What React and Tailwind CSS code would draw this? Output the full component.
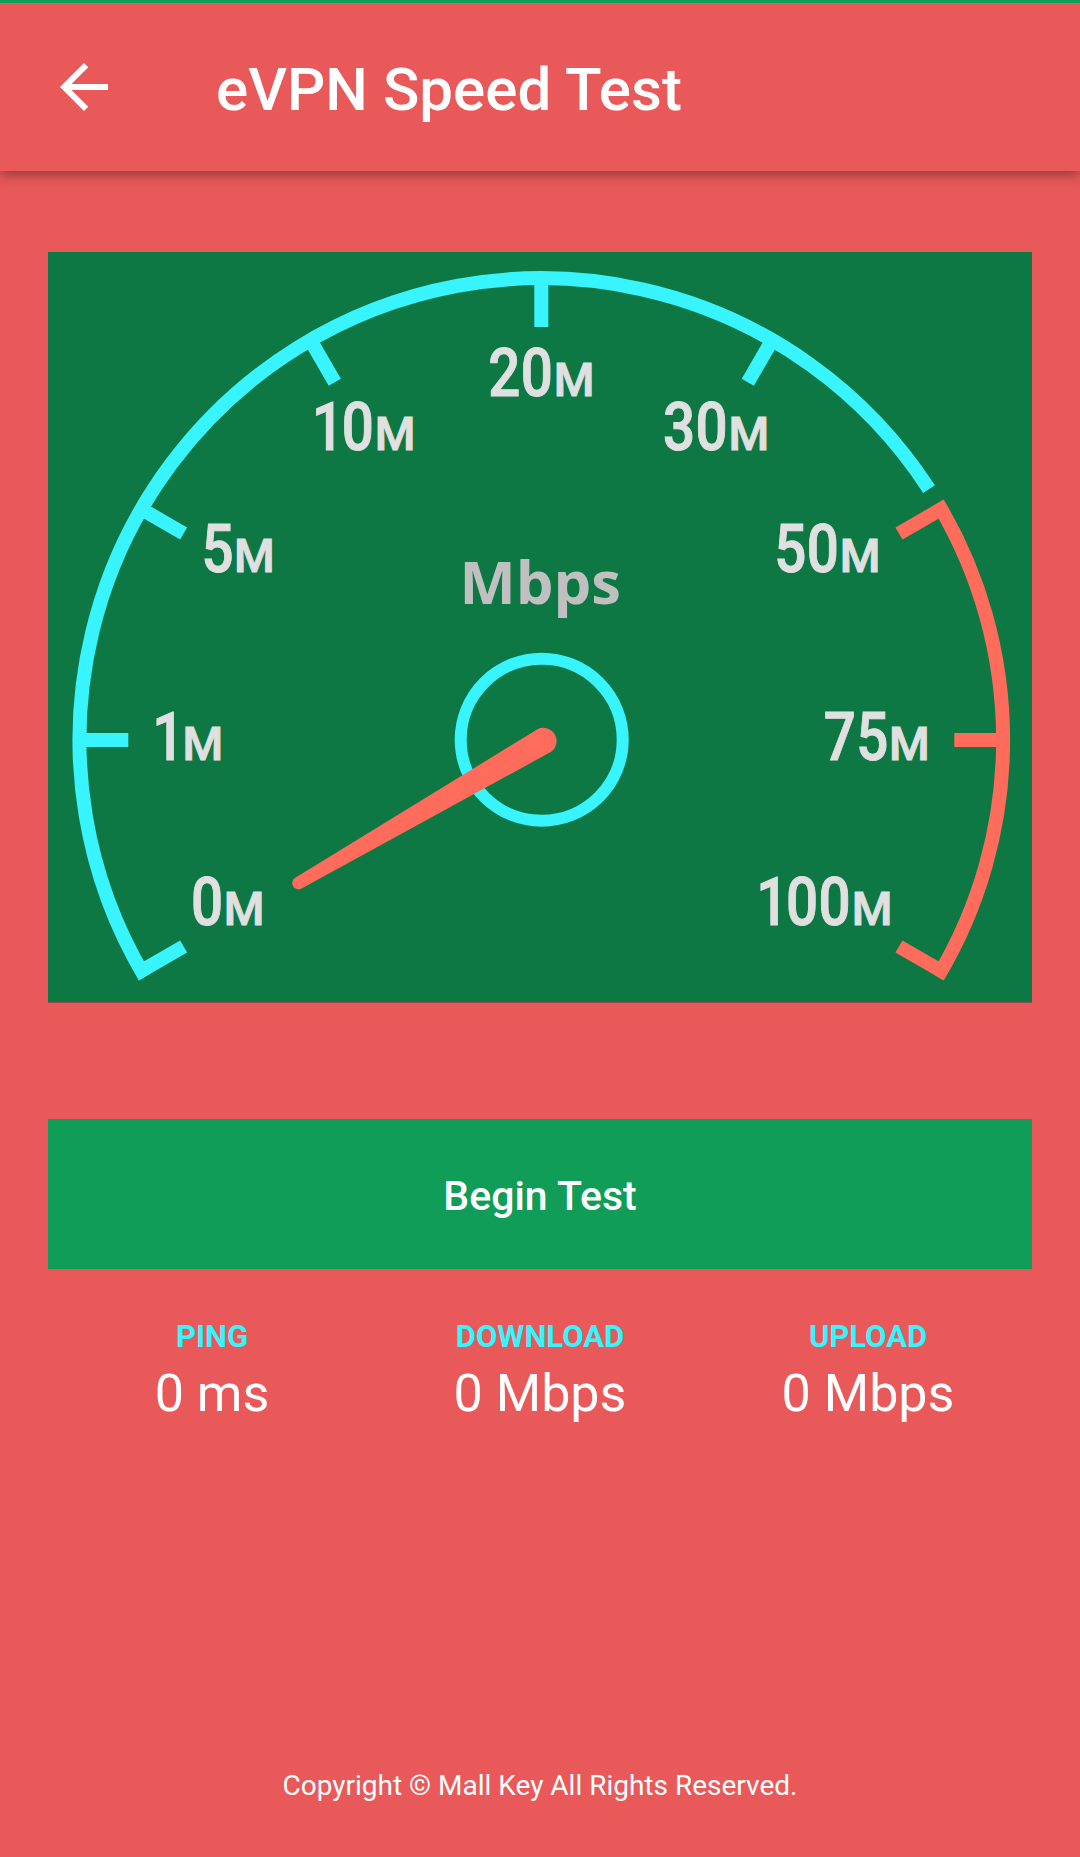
import React from 'react';
import { MdArrowBack } from 'react-icons/md';

const CYAN = '#38f4ff';
const CORAL = '#ff6c5b';

// Dial geometry, in the gauge's own 984 x 751 space
const CX = 493.3;
const CY = 488;
const R = 461.8;

const ticks = [
  { angle: 210, color: CYAN },
  { angle: 180, color: CYAN },
  { angle: 150, color: CYAN },
  { angle: 120, color: CYAN },
  { angle: 90, color: CYAN },
  { angle: 60, color: CYAN },
  { angle: 30, color: CORAL },
  { angle: 0, color: CORAL },
  { angle: -30, color: CORAL },
];

// x is the left edge of the small M, digits run up to it
const labels = [
  { value: '0', x: 179.3, y: 673.5 },
  { value: '1', x: 138, y: 508.9 },
  { value: '5', x: 189.7, y: 320.5 },
  { value: '10', x: 330.3, y: 198.2 },
  { value: '20', x: 509.3, y: 144.2 },
  { value: '30', x: 684, y: 198.2 },
  { value: '50', x: 795.3, y: 320.5 },
  { value: '75', x: 844.7, y: 508.9 },
  { value: '100', x: 807.3, y: 673.5 },
];

const results = [
  { label: 'PING', value: '0 ms' },
  { label: 'DOWNLOAD', value: '0 Mbps' },
  { label: 'UPLOAD', value: '0 Mbps' },
];

const point = (angle, r) => {
  const a = (angle * Math.PI) / 180;
  return [CX + r * Math.cos(a), CY - r * Math.sin(a)];
};

const arc = (from, to) => {
  const large = from - to > 180 ? 1 : 0;
  return `M${point(from, R).join(' ')} A${R} ${R} 0 ${large} 1 ${point(to, R).join(' ')}`;
};

// Tabular digits; the 1 sits a little further right in its cell
const digitOffsets = (value) =>
  [...value].map((d, i) => i * 38.2 + (d === '1' ? 3 : 0)).join(' ');

const Gauge = () => (
  <svg viewBox="0 0 984 751" className="block w-[984px] h-[751px]">
    <rect width="984" height="750" fill="#0d7843" />
    <rect y="750" width="984" height="1" fill="#964d50" />

    <path d={arc(210.86, 32.9)} fill="none" stroke={CYAN} strokeWidth="14" />
    <path d={arc(30.86, -30.86)} fill="none" stroke={CORAL} strokeWidth="14" />
    {ticks.map(({ angle, color }) => {
      const [x1, y1] = point(angle, 468);
      const [x2, y2] = point(angle, 413);
      return <line key={angle} x1={x1} y1={y1} x2={x2} y2={y2} stroke={color} strokeWidth="14" />;
    })}

    {labels.map(({ value, x, y }) => (
      <g key={value} fill="#e0e0e0" stroke="#e0e0e0" strokeWidth="1" className="font-[Roboto,sans-serif] font-medium">
        <text
          transform={`translate(${x - 3.6 - value.length * 32.7} ${y - 0.5}) scale(0.85 1)`}
          x={digitOffsets(value)}
          fontSize="66.5"
        >
          {value}
        </text>
        <text x={x - 3.6} y={y - 0.5} fontSize="46.5">M</text>
      </g>
    ))}

    <text x="411.5" y="352.4" fontSize="59.5" textLength="161.5" lengthAdjust="spacingAndGlyphs" fill="#c0c0c0" className="font-['Open_Sans',sans-serif] font-bold">
      Mbps
    </text>

    {/* Hub and needle */}
    <circle cx="493.7" cy="487.7" r="81" fill="none" stroke={CYAN} strokeWidth="12" />
    <path d="M247.3 625.7 L489.5 477.2 A13.2 13.2 0 0 1 502.7 500 L253.6 636.4 A6.2 6.2 0 0 1 247.3 625.7 Z" fill={CORAL} />
  </svg>
);

const App = () => {
  return (
    <div className="w-[1080px] h-[1857px] flex flex-col bg-[#e95959] text-white font-[Roboto,sans-serif] overflow-hidden">
      <div className="relative z-10 h-[3px] bg-[#0f9d58] shrink-0"></div>

      {/* App bar */}
      <header className="relative h-[168px] shrink-0 flex items-center pl-12 bg-[#e95959] shadow-[0_4px_12px_rgba(0,0,0,0.36)]">
        <MdArrowBack className="w-[72px] h-[72px]" />
        <h1 className="ml-24 mt-[5px] text-[60px] leading-[70px] font-medium tracking-[0.06px]">eVPN Speed Test</h1>
      </header>

      <main className="flex-1 flex flex-col px-12 pt-[81px]">
        <Gauge />

        <button className="mt-[116px] h-[150px] shrink-0 pt-[6px] bg-[#0f9d58] text-[41px] font-medium">Begin Test</button>

        <div className="mt-[48px] grid grid-cols-3 text-center">
          {results.map(({ label, value }) => (
            <div key={label}>
              <div className="text-[31px] leading-[40px] font-bold text-[#38f4ff]">{label}</div>
              <div className="mt-px text-[52px] leading-[72px]">{value}</div>
            </div>
          ))}
        </div>
      </main>

      <footer className="pb-[54px] text-center text-[28px] leading-[34px]">
        Copyright © Mall Key All Rights Reserved.
      </footer>
    </div>
  );
};

export default App;
